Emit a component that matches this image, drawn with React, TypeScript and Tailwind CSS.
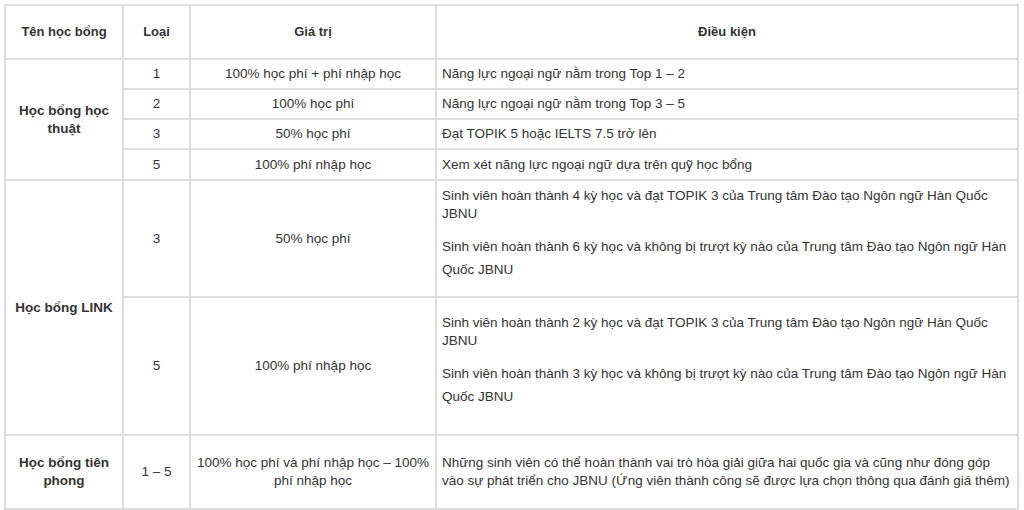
const rows1 = [
  { loai: '1', gia: '100% học phí + phí nhập học', dk: 'Năng lực ngoại ngữ nằm trong Top 1 – 2', h: 'h-[30px]' },
  { loai: '2', gia: '100% học phí', dk: 'Năng lực ngoại ngữ nằm trong Top 3 – 5', h: 'h-[30px]' },
  { loai: '3', gia: '50% học phí', dk: 'Đạt TOPIK 5 hoặc IELTS 7.5 trở lên', h: 'h-[30px]' },
  { loai: '5', gia: '100% phí nhập học', dk: 'Xem xét năng lực ngoại ngữ dựa trên quỹ học bổng', h: 'h-[31px]' },
];

const cell = 'border-2 border-[#dddddd] px-[5px] py-0 align-middle';

const App = () => (
  <div className="pt-[4px] pl-[4px] bg-white min-h-[510px]">
    <table
      className="table-fixed border-collapse w-[1015px] text-[13.5px] leading-[18px] text-[#333333]"
      style={{ fontFamily: '"Liberation Sans", Arial, sans-serif' }}
    >
      <colgroup>
        <col className="w-[118px]" />
        <col className="w-[67px]" />
        <col className="w-[246px]" />
        <col />
      </colgroup>
      <thead>
        <tr className="h-[54px] font-bold text-center text-[13px]">
          <th className={cell}>Tên học bổng</th>
          <th className={cell}>Loại</th>
          <th className={cell}>Giá trị</th>
          <th className={cell}>Điều kiện</th>
        </tr>
      </thead>
      <tbody>
        {rows1.map((r, i) => (
          <tr key={i} className={r.h}>
            {i === 0 && (
              <td rowSpan={4} className={`${cell} font-bold text-center`}>
                Học bổng học thuật
              </td>
            )}
            <td className={`${cell} text-center`}>{r.loai}</td>
            <td className={`${cell} text-center`}>{r.gia}</td>
            <td className={cell}>{r.dk}</td>
          </tr>
        ))}

        <tr className="h-[117px]">
          <td rowSpan={2} className={`${cell} font-bold text-center`}>
            Học bổng LINK
          </td>
          <td className={`${cell} text-center`}>3</td>
          <td className={`${cell} text-center`}>50% học phí</td>
          <td className={cell}>
            <p className="mb-[12px]">
              Sinh viên hoàn thành 4 kỳ học và đạt TOPIK 3 của Trung tâm Đào tạo Ngôn ngữ Hàn Quốc
              <br />
              JBNU
            </p>
            <p className="leading-[23px] mb-[10px]">
              Sinh viên hoàn thành 6 kỳ học và không bị trượt kỳ nào của Trung tâm Đào tạo Ngôn ngữ Hàn
              <br />
              Quốc JBNU
            </p>
          </td>
        </tr>
        <tr className="h-[138px]">
          <td className={`${cell} text-center`}>5</td>
          <td className={`${cell} text-center`}>100% phí nhập học</td>
          <td className={cell}>
            <p className="mb-[12px]">
              Sinh viên hoàn thành 2 kỳ học và đạt TOPIK 3 của Trung tâm Đào tạo Ngôn ngữ Hàn Quốc
              <br />
              JBNU
            </p>
            <p className="leading-[23px] mb-[10px]">
              Sinh viên hoàn thành 3 kỳ học và không bị trượt kỳ nào của Trung tâm Đào tạo Ngôn ngữ Hàn
              <br />
              Quốc JBNU
            </p>
          </td>
        </tr>

        <tr className="h-[74px]">
          <td className={`${cell} font-bold text-center`}>Học bổng tiên phong</td>
          <td className={`${cell} text-center`}>1 – 5</td>
          <td className={`${cell} text-center`}>100% học phí và phí nhập học – 100% phí nhập học</td>
          <td className={cell}>
            Những sinh viên có thể hoàn thành vai trò hòa giải giữa hai quốc gia và cũng như đóng góp
            <br />
            vào sự phát triển cho JBNU (Ứng viên thành công sẽ được lựa chọn thông qua đánh giá thêm)
          </td>
        </tr>
      </tbody>
    </table>
  </div>
);

export default App;
